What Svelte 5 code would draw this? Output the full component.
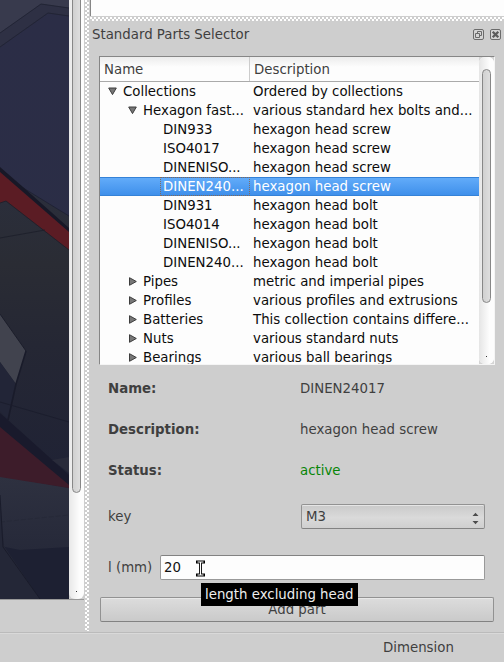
<script>
  const rows = [
    { level: 0, open: true, name: 'Collections', text: 'Ordered by collections' },
    { level: 1, open: true, name: 'Hexagon fast...', text: 'various standard hex bolts and...' },
    { level: 2, name: 'DIN933', text: 'hexagon head screw' },
    { level: 2, name: 'ISO4017', text: 'hexagon head screw' },
    { level: 2, name: 'DINENISO...', text: 'hexagon head screw' },
    { level: 2, name: 'DINEN240...', text: 'hexagon head screw', selected: true },
    { level: 2, name: 'DIN931', text: 'hexagon head bolt' },
    { level: 2, name: 'ISO4014', text: 'hexagon head bolt' },
    { level: 2, name: 'DINENISO...', text: 'hexagon head bolt' },
    { level: 2, name: 'DINEN240...', text: 'hexagon head bolt' },
    { level: 1, open: false, name: 'Pipes', text: 'metric and imperial pipes' },
    { level: 1, open: false, name: 'Profiles', text: 'various profiles and extrusions' },
    { level: 1, open: false, name: 'Batteries', text: 'This collection contains differe...' },
    { level: 1, open: false, name: 'Nuts', text: 'various standard nuts' },
    { level: 1, open: false, name: 'Bearings', text: 'various ball bearings' }
  ];
</script>

<div class="window">
  <div class="work">
    <div class="view">
      <svg class="art" width="69" height="599" viewBox="0 0 69 599">
        <defs>
          <linearGradient id="sky" x1="0" y1="0" x2="0" y2="1"><stop offset="0" stop-color="#2b2d46" /><stop offset="1" stop-color="#2a2e46" /></linearGradient>
          <linearGradient id="low" x1="0" y1="0" x2="0" y2="1"><stop offset="0" stop-color="#2b2f3e" /><stop offset=".3" stop-color="#2a2c34" /><stop offset=".55" stop-color="#252734" /><stop offset="1" stop-color="#1f2235" /></linearGradient>
          <linearGradient id="slab" x1="0" y1="0" x2="0" y2="1"><stop offset="0" stop-color="#2e3140" /><stop offset="1" stop-color="#212435" /></linearGradient>
        </defs>
        <rect width="69" height="599" fill="url(#sky)" />
        <path d="M0 0H69V8L41 4L0 33Z" fill="#383a4d" />
        <path d="M0 33L41 4L69 8V16L48 13L0 47Z" fill="#2e3044" />
        <path d="M0 33L41 4L69 8M0 47L48 13L69 16" fill="none" stroke="#202231" stroke-width=".8" />
        <path d="M0 168L25 189L69 216V490H0Z" fill="url(#low)" />
        <path d="M20 186L69 216" stroke="#1d2032" stroke-width=".8" />
        <path d="M0 170L69 231V250L6 201L0 203Z" fill="#5b1c24" />
        <path d="M0 167L23 187L69 228V232L0 172Z" fill="#171827" />
        <path d="M0 203L6 201L69 250M0 238L45 230" fill="none" stroke="#1c1e2a" stroke-width=".8" />
        <path d="M0 314L26 351L16 384L0 362Z" fill="#41434e" />
        <path d="M0 362L16 384L8 420L0 411Z" fill="#222537" />
        <path d="M0 314L26 351" fill="none" stroke="#1c1e2b" />
        <path d="M26 351L16 384L8 420" fill="none" stroke="#191b2a" stroke-width="1.6" />
        <path d="M0 402L69 422" stroke="#1b1d2c" stroke-width=".9" />
        <path d="M0 476L69 488V599H0Z" fill="url(#slab)" />
        <path d="M0 425L69 482V488L0 477Z" fill="#3d1c2a" />
        <path d="M0 413L8 420L69 475V485L0 427Z" fill="#191a2c" />
        <path d="M52 460L69 457V473Z" fill="#292b3a" />
        <path d="M0 522L69 515" stroke="#262938" stroke-dasharray="5 2" />
        <path d="M0 546L20 550L69 547V599H0Z" fill="#1d2032" />
        <path d="M0 500L4 546L40 599H0Z" fill="#242737" />
        <path d="M0 495L3 547L40 599" fill="none" stroke="#1a1c2b" />
      </svg>
      <div class="bar left"><i class="thumb"></i><b></b></div>
    </div>
    <div class="dots vertical"></div>
    <aside>
      <div class="upper"></div>
      <div class="dots horizontal"></div>
      <div class="title">
        <span>Standard Parts Selector</span>
        <svg width="11" height="11" viewBox="0 0 11 11"><rect x=".5" y=".5" width="10" height="10" rx="1.5" fill="#d5d5d5" stroke="#6b6b6b" /><path d="M4.5 5V2.5H8.5V6.5H6.5M2.5 4.5H6.5V8.5H2.5Z" fill="none" stroke="#6b6b6b" /></svg>
        <svg width="11" height="11" viewBox="0 0 11 11"><rect x=".5" y=".5" width="10" height="10" rx="1.5" fill="#d5d5d5" stroke="#6b6b6b" /><path d="M2.7 2.7L8.3 8.3M8.3 2.7L2.7 8.3" stroke="#5c5c5c" stroke-width="2.3" /></svg>
      </div>
      <div class="tree">
        <div class="table">
          <div class="head"><span class="c1">Name</span><span class="c2">Description</span></div>
          {#each rows as r}
            <div class="row l{r.level}" class:selected={r.selected}>
              <span class="c1">
                {#if r.open !== undefined}
                  <svg width="9" height="9" viewBox="0 0 9 9"><path d={r.open ? 'M.7 1H8.3L4.5 7.6Z' : 'M1.5 .7V8.3L8.3 4.5Z'} fill="#777" stroke="#3c3c3c" /></svg>
                {/if}
                <em>{r.name}</em>
              </span>
              <span class="c2">{r.text}</span>
            </div>
          {/each}
        </div>
        <div class="bar right"><i class="thumb"></i><b></b></div>
      </div>
      <div class="form">
        <div class="info"><strong>Name:</strong><span>DINEN24017</span></div>
        <div class="info"><strong>Description:</strong><span>hexagon head screw</span></div>
        <div class="info"><strong>Status:</strong><span class="active">active</span></div>
        <div class="field key">
          <span>key</span>
          <div class="combo"><span>M3</span>
            <svg width="7" height="13" viewBox="0 0 7 13"><path d="M.5 4L3.5 .8L6.5 4ZM.5 9L3.5 12.2L6.5 9Z" fill="#4c4c4c" /></svg>
          </div>
        </div>
        <div class="field len"><span>l (mm)</span><div class="input">20</div></div>
      </div>
      <div class="button">Add part</div>
      <div class="tip">length excluding head</div>
      <svg class="cursor" width="9" height="17" viewBox="0 0 9 17"><path d="M1.5 2H7.5M4.5 2V15M1.5 15H7.5" fill="none" stroke="#000" stroke-width="3" stroke-linecap="square" /><path d="M1.5 2H7.5M4.5 2V15M1.5 15H7.5" fill="none" stroke="#fff" stroke-width="1.2" /></svg>
    </aside>
  </div>
  <footer>Dimension</footer>
</div>

<style>
  .window { width: 504px; height: 662px; overflow: hidden; display: flex; flex-direction: column; background: #cecece; color: #3f3f3f; font: 13.33px/19px "DejaVu Sans", sans-serif; white-space: nowrap; }
  .window * { box-sizing: border-box; }
  .work { height: 632px; display: flex; }
  .view { width: 84px; height: 600px; display: flex; border-bottom: 1px solid #999; }
  .art { display: block; }
  .bar { position: relative; width: 15px; flex: none; background: linear-gradient(90deg, #e8e8e8, #fdfdfd 70%); }
  .thumb { position: absolute; left: 3px; width: 9px; border: 1px solid #878787; border-radius: 5px; background: linear-gradient(90deg, #d0d0d0, #dedede); }
  .left { border-radius: 0 0 6px 6px; }
  .left .thumb { top: -8px; height: 501px; }
  .bar b { position: absolute; left: 7px; bottom: 7px; width: 1px; height: 1px; background: #333; }
  .dots { background-size: 4px 4px; background-image: radial-gradient(circle at 1px 1px, #fff .8px, transparent .9px), radial-gradient(circle at 3px 3px, #fff .8px, transparent .9px); }
  .vertical { width: 4px; height: 631px; margin-left: 1px; }
  aside { position: relative; width: 415px; padding-left: 1px; display: flex; flex-direction: column; }
  .upper { height: 16px; background: #fdfdfd; border-left: 1px solid #868686; flex: none; }
  .horizontal { height: 4px; margin-top: 1px; flex: none; }
  .title { display: flex; align-items: center; height: 27px; padding: 0 3px 0 2px; }
  .title span { flex: 1; }
  .title svg { margin-left: 6px; }
  .tree { margin: 8px 0 0 9px; width: 396px; height: 309px; display: flex; border: 1px solid #868686; border-right-color: #f5f5f5; border-bottom-color: #f5f5f5; background: #fdfdfd; overflow: hidden; flex: none; }
  .table { width: 379px; overflow: hidden; }
  .head { display: flex; height: 25px; border-bottom: 1px solid #aaa; background: linear-gradient(#ececec, #fdfdfd 10px); line-height: 25px; }
  .head .c1 { padding-left: 4px; border-right: 1px solid #ccc; }
  .head .c2 { padding-left: 4px; }
  .c1 { width: 150px; flex: none; }
  .row { display: flex; height: 19px; color: #0c0c0c; }
  .row .c1 { display: flex; align-items: center; }
  .row .c2 { padding-left: 3px; }
  .row svg { flex: none; margin-right: 6px; }
  .l0 .c1 { padding-left: 8px; }
  .l1 .c1 { padding-left: 28px; }
  .l2 .c1 { padding-left: 60px; }
  em { font-style: normal; }
  .l2 em { padding-left: 3px; }
  .selected { background: linear-gradient(#64adfa, #3d8eea); color: #fff; box-shadow: inset 0 1px #3582d7, inset 0 -1px #3582d7; }
  .selected em { width: 90px; height: 19px; padding-left: 2px; border: 1px dotted #836b5d; line-height: 17px; }
  .right { background: linear-gradient(90deg, #e5e5e5, #fdfdfd 70%); border-radius: 6px; box-shadow: 0 0 0 6px #d5d5d5; clip-path: inset(0); }
  .right .thumb { top: 12px; height: 234px; }
  .form { padding-left: 18px; }
  .info { display: flex; height: 41px; line-height: 41px; }
  .info:first-child { margin-top: 3px; }
  strong { width: 192px; }
  .active { color: #078507; }
  .field { display: flex; align-items: center; }
  .key { margin-top: 13px; height: 25px; justify-content: space-between; width: 377px; }
  .combo { width: 184px; height: 25px; padding: 0 5px 0 4px; display: flex; justify-content: space-between; align-items: center; border: 1px solid #929292; border-bottom-color: #828282; border-radius: 2px; background: linear-gradient(#c9c9c9, #dadada 55%, #cfcfcf); box-shadow: inset 0 1px #e5e5e5; }
  .combo svg { margin-top: 3px; }
  .len { margin-top: 26px; }
  .len > span { width: 52px; }
  .input { width: 325px; height: 25px; border: 1px solid #999; border-top-color: #828282; border-radius: 2px; background: #fdfdfd; color: #111; line-height: 24px; padding-left: 3px; }
  .button { width: 394px; height: 25px; margin: 17px 0 0 10px; text-align: center; line-height: 24px; border: 1px solid #929292; border-bottom-color: #828282; border-radius: 2px; background: linear-gradient(#dcdcdc, #cacaca); box-shadow: inset 0 1px #e8e8e8; }
  .tip { position: absolute; left: 112px; top: 583px; width: 157px; height: 23px; padding-left: 4px; background: #000; color: #eee; line-height: 23px; }
  .cursor { position: absolute; left: 107px; top: 560px; }
  footer { height: 30px; border-top: 1px solid #bbb; box-shadow: inset 0 1px #d9d9d9; padding-left: 383px; line-height: 30px; }
</style>
